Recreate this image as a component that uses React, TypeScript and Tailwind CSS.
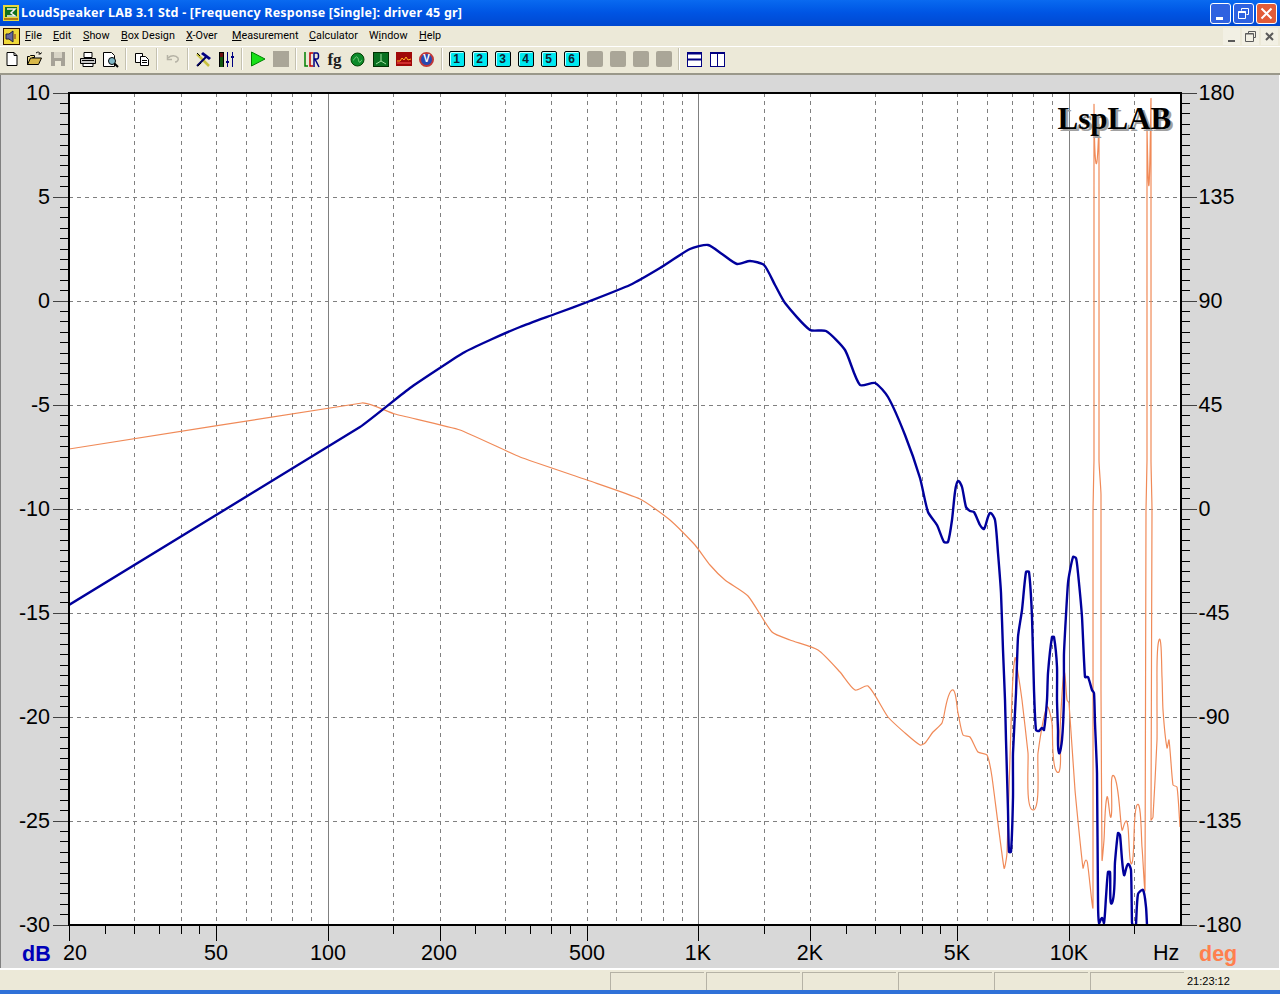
import React from "react";

// chart geometry, in page pixels (the svg's viewBox starts at the panel's top)
const PLOT = { l: 69, r: 1181, t: 93, b: 925 };
const SVG_TOP = 75;
const xOf = (hz: number) => Math.round(69 + Math.log10(hz / 20) * 370.5) + 0.5;

const blue =
  "69,605 360,427 410,388 463,353 490,340 520,327 555,314 590,301 630,285 660,268 690,249 708,245 722,254 737,264 750,261 764,265 775,285 785,303 810,330 826,331 845,350 860,385 875,383 888,397 905,435 920,478 928,512 937,525 944,542 948,542 952,520 955,492 958,481 962,487 966,507 970,511 974,512 980,525 984,529 990,513 995,520 998,553 1001,593 1003,650 1005,700 1006,740 1008,810 1009,852 1011,852 1013,797 1013,753 1016,693 1018,637 1022,610 1026,572 1029,572 1032,617 1034,690 1036,730 1039,731 1042,728 1044,730 1047,700 1048,673 1052,637 1054,637 1057,667 1057,700 1058,730 1059,753 1062,740 1064,697 1064,653 1068,583 1073,557 1076,558 1078,573 1082,617 1085,677 1088,677 1092,690 1094,693 1095,723 1097,773 1098,900 1099,923 1102,918 1104,923 1106,897 1108,872 1110,872 1112,903 1115,862 1118,833 1120,835 1124,875 1128,864 1131,870 1132,923 1133,925";
const blue2 = "1136,925 1138,894 1143,890 1146,907 1147,925";

const orange =
  "69,449 362,403 395,414 460,430 520,457 590,481 640,499 670,520 695,545 710,565 725,580 748,596 772,632 790,640 818,650 840,672 855,690 868,686 888,717 905,733 920,745 925,743 933,732 942,723 952,690 958,713 963,735 970,737 978,752 987,755 992,777 1004,868 1007,853 1010,757 1012,697 1015,658 1018,673 1022,700 1028,753 1033,810 1038,753 1047,707 1052,723 1057,772 1060,730 1064,673 1067,700 1069,703 1075,790 1083,868 1086,860 1088,867 1093,907 1093,510 1094,460 1094,105 1096,163 1099,125 1099,460 1101,495 1101,690 1102,860 1104,840 1107,797 1111,817 1114,776 1122,830 1126,821 1128,827 1132,863 1137,805 1142,847 1145,890 1146,510 1147,460 1147,130 1149,185 1151,99 1151,460 1152,510 1151,820 1153,817 1157,740 1157,690 1159,640 1162,677 1163,710 1167,748 1169,740 1173,785 1177,787 1180,827";

// rounds the hand-read points into a curve; handles stay short so nothing overshoots
function smooth(points: string) {
  const p = points.split(" ").map((s) => s.split(",").map(Number));
  const k = 0.2;
  const tangent = (i: number) => {
    const a = p[Math.max(i - 1, 0)];
    const b = p[Math.min(i + 1, p.length - 1)];
    const len = Math.hypot(b[0] - a[0], b[1] - a[1]) || 1;
    return [(b[0] - a[0]) / len, (b[1] - a[1]) / len];
  };
  let d = `M${p[0][0]} ${p[0][1]}`;
  for (let i = 0; i < p.length - 1; i++) {
    const b = p[i];
    const c = p[i + 1];
    const h = Math.min(Math.hypot(c[0] - b[0], c[1] - b[1]) * k, 8);
    const t0 = tangent(i);
    const t1 = tangent(i + 1);
    d += `C${b[0] + t0[0] * h} ${b[1] + t0[1] * h} ${c[0] - t1[0] * h} ${c[1] - t1[1] * h} ${c[0]} ${c[1]}`;
  }
  return d;
}

const dashedX = [30, 40, 50, 60, 70, 80, 90, 150, 200, 300, 400, 500, 600, 700, 800, 900, 1500, 2000, 3000, 4000, 5000, 6000, 7000, 8000, 9000, 15000];
const solidX = [100, 1000, 10000];
const shortTicks = [25, 30, 35, 40, 45, 150, 250, 300, 350, 400, 450, 1500, 2500, 3000, 3500, 4000, 4500, 15000];
const longTicks = [20, 50, 100, 200, 500, 1000, 2000, 5000, 10000];

const leftLabels = ["10", "5", "0", "-5", "-10", "-15", "-20", "-25", "-30"];
const rightLabels = ["180", "135", "90", "45", "0", "-45", "-90", "-135", "-180"];
const xLabels = [
  { t: "20", x: 75 },
  { t: "50", x: 216 },
  { t: "100", x: 328 },
  { t: "200", x: 439 },
  { t: "500", x: 587 },
  { t: "1K", x: 698 },
  { t: "2K", x: 810 },
  { t: "5K", x: 957 },
  { t: "10K", x: 1069 },
];

function Chart() {
  const minor = Array.from({ length: 81 }, (_, i) => PLOT.t + i * 10.4);
  return (
    <svg width="1280" height="893" viewBox={`0 ${SVG_TOP} 1280 893`} className="block">
      <defs>
        <clipPath id="plot">
          <rect x={PLOT.l} y={PLOT.t} width={PLOT.r - PLOT.l} height={PLOT.b - PLOT.t} />
        </clipPath>
      </defs>
      <rect x={PLOT.l} y={PLOT.t} width={PLOT.r - PLOT.l} height={PLOT.b - PLOT.t} fill="#fff" />
      {/* grid */}
      {dashedX.map((hz) => (
        <line key={hz} x1={xOf(hz)} x2={xOf(hz)} y1={PLOT.t} y2={PLOT.b} stroke="#808080" strokeDasharray="4 4" shapeRendering="crispEdges" />
      ))}
      {solidX.map((hz) => (
        <line key={hz} x1={xOf(hz)} x2={xOf(hz)} y1={PLOT.t} y2={PLOT.b} stroke="#808080" shapeRendering="crispEdges" />
      ))}
      {[1, 2, 3, 4, 5, 6, 7].map((i) => (
        <line key={i} x1={PLOT.l} x2={PLOT.r} y1={PLOT.t + i * 104} y2={PLOT.t + i * 104} stroke="#808080" strokeDasharray="4 4" shapeRendering="crispEdges" />
      ))}
      {/* curves */}
      <g clipPath="url(#plot)" fill="none" strokeLinejoin="round">
        <path d={smooth(orange)} stroke="#f08a58" strokeWidth="1.2" />
        <path d={smooth(blue)} stroke="#00009c" strokeWidth="2.4" />
        <path d={smooth(blue2)} stroke="#00009c" strokeWidth="2.4" />
      </g>
      {/* ticks */}
      {minor.map((y, i) => (
        <g key={i} shapeRendering="crispEdges">
          <line x1={i % 10 === 0 ? 53 : 60} x2={PLOT.l} y1={y} y2={y} stroke={i % 10 === 0 ? "#404040" : "#000"} />
          <line x1={PLOT.r} x2={i % 10 === 0 ? 1197 : 1190} y1={y} y2={y} stroke={i % 10 === 0 ? "#404040" : "#000"} />
        </g>
      ))}
      {shortTicks.map((hz) => (
        <line key={hz} x1={xOf(hz)} x2={xOf(hz)} y1={PLOT.b} y2={934} stroke="#000" shapeRendering="crispEdges" />
      ))}
      {longTicks.map((hz) => (
        <line key={hz} x1={xOf(hz)} x2={xOf(hz)} y1={PLOT.b} y2={941} stroke="#000" shapeRendering="crispEdges" />
      ))}
      <rect x={PLOT.l} y={PLOT.t} width={PLOT.r - PLOT.l} height={PLOT.b - PLOT.t} fill="none" stroke="#000" strokeWidth="2" shapeRendering="crispEdges" />
      {/* labels */}
      <g fontFamily="'Liberation Sans', Arial, sans-serif" fontSize="21.5" fill="#000">
        {leftLabels.map((t, i) => (
          <text key={t} x="50" y={PLOT.t + i * 104 + 7} textAnchor="end">{t}</text>
        ))}
        {rightLabels.map((t, i) => (
          <text key={t} x="1198.500" y={PLOT.t + i * 104 + 7}>{t}</text>
        ))}
        {xLabels.map((l) => (
          <text key={l.t} x={l.x} y="960" textAnchor="middle">{l.t}</text>
        ))}
        <text x="1153" y="960">Hz</text>
        <text x="22" y="961" fill="#0000b8" fontWeight="700">dB</text>
        <text x="1199" y="961" fill="#ff7f4d" fontWeight="700">deg</text>
      </g>
      <g fontFamily="'Liberation Serif', 'Times New Roman', serif" fontWeight="700" fontSize="31">
        <text x="1060" y="131" fill="#a0a0a0">LspLAB</text>
        <text x="1057.500" y="129" fill="#000">LspLAB</text>
      </g>
    </svg>
  );
}

function Sep({ narrow }: { narrow?: boolean }) {
  return <div className={`${narrow ? "mr-[2px] ml-[3px]" : "mx-[3px]"} h-[22px] w-[2px] border-r border-l border-r-white border-l-[#c4c1b0]`} />;
}

function Tb({ children }: { children: React.ReactNode }) {
  return <div className="flex h-[23px] w-[23px] items-center justify-center">{children}</div>;
}

function NewIcon() {
  return (
    <svg width="16" height="16" viewBox="0 0 16 16">
      <path d="M3 1.500h7l3 3v10H3z" fill="#fff" stroke="#000" />
      <path d="M10 1.500v3h3" fill="none" stroke="#000" />
    </svg>
  );
}
function OpenIcon() {
  return (
    <svg width="17" height="16" viewBox="0 0 17 16">
      <path d="M1.500 13.500v-8h2l1-1h4v2h-2l-3 7z" fill="#f4e08a" stroke="#000" />
      <path d="M1.500 13.500l3-6.500h11l-3 6.500z" fill="#d8b84a" stroke="#000" />
      <path d="M10 2c2-1.500 3.500-1 4.500 1M14.500 3l1-1.500M14.500 3l-2 0" fill="none" stroke="#000" />
    </svg>
  );
}
function SaveIcon() {
  return (
    <svg width="16" height="16" viewBox="0 0 16 16">
      <path d="M1 1h14v14H1z" fill="#a6a297" />
      <path d="M4 1h8v6H4z" fill="#d8d4c6" />
      <path d="M5 10h6v5H5z" fill="#ece9d8" />
    </svg>
  );
}
function PrintIcon() {
  return (
    <svg width="18" height="16" viewBox="0 0 18 16">
      <path d="M5 1.500h8v5H5z" fill="#fff" stroke="#000" />
      <path d="M1.500 7.500h15v5h-15z" fill="#c8c8c8" stroke="#000" />
      <path d="M4 12.500h10v3H4z" fill="#fff" stroke="#000" />
      <path d="M3 9.500h12" stroke="#000" />
    </svg>
  );
}
function PreviewIcon() {
  return (
    <svg width="17" height="17" viewBox="0 0 17 17">
      <path d="M1.500 1.500h8l3 3v11h-11z" fill="#fff" stroke="#000" />
      <circle cx="10" cy="10" r="3.500" fill="#7fb8c8" stroke="#000" />
      <path d="M12.500 12.500l3.500 3.500" stroke="#000" strokeWidth="2" />
    </svg>
  );
}
function CopyIcon() {
  return (
    <svg width="16" height="16" viewBox="0 0 16 16">
      <path d="M1.500 2.500h7v9h-7z" fill="#fff" stroke="#000" />
      <path d="M6.500 5.500h5l3 3v6h-8z" fill="#fff" stroke="#000" />
      <path d="M8 9.500h5M8 11.500h5" stroke="#000" />
    </svg>
  );
}
function UndoIcon() {
  return (
    <svg width="16" height="16" viewBox="0 0 16 16" fill="none">
      <path d="M3 7c3-3 8-3 10 0 1 2-1 4-3 4" stroke="#b5b2a5" strokeWidth="1.500" />
      <path d="M2.500 4v4.500H7" stroke="#b5b2a5" strokeWidth="1.500" />
    </svg>
  );
}
function ToolsIcon() {
  return (
    <svg width="18" height="18" viewBox="0 0 18 18">
      <path d="M2 4l12 12" stroke="#c8c040" strokeWidth="2.500" />
      <path d="M2 16L12 6" stroke="#000060" strokeWidth="2" />
      <path d="M8 2l8 6-2 2-8-6z" fill="#000080" />
      <path d="M2 3l3 3M3 16l3-3" stroke="#000" />
    </svg>
  );
}
function MixerIcon() {
  return (
    <svg width="17" height="17" viewBox="0 0 17 17">
      <path d="M1 1h5v15H1z" fill="#000" />
      <path d="M2 3h3M2 5h3" stroke="#d02020" />
      <path d="M2 7h3M2 9h3M2 11h3M2 13h3M2 15h3" stroke="#20b020" />
      <path d="M9.500 1v15M14.500 1v15" stroke="#000080" />
      <path d="M8 10h3v2H8zM13 5h3v2h-3z" fill="#000080" />
    </svg>
  );
}
function LcrIcon() {
  return (
    <svg width="17" height="17" viewBox="0 0 17 17" fill="none">
      <path d="M2 1v14h3" stroke="#008000" strokeWidth="1.500" />
      <path d="M10 2H7v13h3" stroke="#c00000" strokeWidth="1.500" />
      <path d="M11 16V2h3c2 0 2 6 0 6h-2l4 8" stroke="#000080" strokeWidth="1.500" />
    </svg>
  );
}

function NumBtn({ n }: { n: number }) {
  return (
    <div className="flex h-[16px] w-[16px] items-center justify-center rounded-[2px] border border-black bg-[#00e8f0] text-[12px] leading-none font-bold text-[#102030] shadow-[inset_1px_1px_0_#b8ffff] [font-family:'Liberation_Sans',sans-serif]">
      {n}
    </div>
  );
}

const menus = [
  { l: "File", u: 0, w: "w-[28px]" },
  { l: "Edit", u: 0, w: "w-[30px]" },
  { l: "Show", u: 0, w: "w-[38px]" },
  { l: "Box Design", u: 0, w: "w-[65px]" },
  { l: "X-Over", u: 0, w: "w-[46px]" },
  { l: "Measurement", u: 0, w: "w-[77px]" },
  { l: "Calculator", u: 0, w: "w-[60px]" },
  { l: "Window", u: 1, w: "w-[50px]" },
  { l: "Help", u: 0, w: "w-[34px]" },
];

export default function App() {
  return (
    <div className="flex h-[994px] w-[1280px] flex-col overflow-hidden bg-[#ece9d8] [font-family:'Roboto','Liberation_Sans',sans-serif]">
      {/* title bar */}
      <div className="flex h-[26px] shrink-0 items-center bg-gradient-to-b from-[#0a6af0] via-[#0054e3] to-[#0048d0] pr-[3px] pl-[3px]">
        <svg width="16" height="16" viewBox="0 0 16 16" className="shrink-0">
          <rect width="16" height="16" fill="#e8d840" />
          <rect x="2" y="2" width="12" height="10" fill="#107020" />
          <path d="M4 4h8L8 8l4 3H4" fill="none" stroke="#f0f0f0" strokeWidth="1.500" />
          <rect x="1" y="13" width="14" height="2" fill="#b07810" />
        </svg>
        <div className="ml-[2px] flex-1 text-[12.500px] font-bold tracking-[0.2px] whitespace-nowrap text-white [font-family:'Noto_Sans',sans-serif]">
          LoudSpeaker LAB 3.1 Std - [Frequency Response [Single]: driver 45 gr]
        </div>
        <div className="flex gap-[2px]">
          <div className="flex h-[21px] w-[21px] items-end rounded-[3px] border border-white bg-[#2f62e0] pb-[3px] pl-[5px]">
            <div className="h-[3px] w-[7px] bg-white" />
          </div>
          <div className="flex h-[21px] w-[21px] items-center justify-center rounded-[3px] border border-white bg-[#2f62e0]">
            <svg width="13" height="13" viewBox="0 0 13 13" fill="none" stroke="#fff">
              <path d="M4.500 3.500v-2h7v6h-2" />
              <path d="M1.500 4.500h7v7h-7z" />
              <path d="M1.500 5h7" strokeWidth="2" />
            </svg>
          </div>
          <div className="flex h-[21px] w-[21px] items-center justify-center rounded-[3px] border border-white bg-[#e25c38]">
            <svg width="13" height="13" viewBox="0 0 13 13" stroke="#fff" strokeWidth="2">
              <path d="M1.500 1.500l10 10M11.500 1.500l-10 10" />
            </svg>
          </div>
        </div>
      </div>

      {/* menu bar */}
      <div className="flex h-[21px] shrink-0 items-center border-b border-b-white pl-[3px] text-[10.800px] text-black">
        <svg width="17" height="17" viewBox="0 0 17 17" className="shrink-0">
          <rect x="0.500" y="0.500" width="16" height="16" fill="#f0d838" stroke="#301000" />
          <path d="M3 6h3l4-3v11l-4-3H3z" fill="#6868a0" stroke="#202040" />
          <path d="M12 6v5" stroke="#802020" />
        </svg>
        <div className="ml-[5px] flex flex-1 items-center">
          {menus.map((m) => (
            <div key={m.l} className={`${m.w} whitespace-nowrap`}>
              {m.l.slice(0, m.u)}
              <span className="underline">{m.l[m.u]}</span>
              {m.l.slice(m.u + 1)}
            </div>
          ))}
        </div>
        <div className="flex items-center gap-[2px] pr-[2px]">
          <div className="flex h-[17px] w-[17px] items-end justify-center bg-[#f2f0e4] pb-[3px]">
            <div className="h-[2px] w-[7px] bg-[#5a5a5a]" />
          </div>
          <div className="flex h-[17px] w-[17px] items-center justify-center bg-[#f2f0e4]">
            <svg width="11" height="11" viewBox="0 0 11 11" fill="none" stroke="#5a5a5a">
              <path d="M3.500 2.500v-2h7v6h-2" />
              <path d="M0.500 3h8M0.500 2.500h8v8h-8z" />
            </svg>
          </div>
          <div className="flex h-[17px] w-[17px] items-center justify-center bg-[#f2f0e4]">
            <svg width="9" height="9" viewBox="0 0 9 9" stroke="#5a5a5a" strokeWidth="2">
              <path d="M1 1l7 7M8 1L1 8" />
            </svg>
          </div>
        </div>
      </div>

      {/* toolbar */}
      <div className="flex h-[28px] shrink-0 items-center border-b-[2px] border-b-[#9a988a] pb-[2px]">
        <Tb><NewIcon /></Tb>
        <Tb><OpenIcon /></Tb>
        <Tb><SaveIcon /></Tb>
        <Sep narrow />
        <Tb><PrintIcon /></Tb>
        <Tb><PreviewIcon /></Tb>
        <Sep />
        <Tb><CopyIcon /></Tb>
        <Sep />
        <Tb><UndoIcon /></Tb>
        <Sep />
        <Tb><ToolsIcon /></Tb>
        <Tb><MixerIcon /></Tb>
        <Sep />
        <Tb>
          <svg width="16" height="16" viewBox="0 0 16 16"><path d="M1.500 1v14L15 8z" fill="#18e018" stroke="#008000" /></svg>
        </Tb>
        <Tb><div className="h-[16px] w-[16px] bg-[#aaa698]" /></Tb>
        <Sep />
        <Tb><LcrIcon /></Tb>
        <Tb><span className="text-[17px] leading-none font-bold text-[#202020] [font-family:'Liberation_Serif',serif]">fg</span></Tb>
        <Tb>
          <svg width="15" height="15" viewBox="0 0 15 15">
            <circle cx="7.500" cy="7.500" r="6.500" fill="#0c8a2a" stroke="#004000" />
            <path d="M3 8c2 0 2-4 4-3s1 6 3 5 1-2 2-2" fill="none" stroke="#80d080" />
          </svg>
        </Tb>
        <Tb>
          <svg width="16" height="15" viewBox="0 0 16 15">
            <rect x="0.500" y="0.500" width="15" height="14" fill="#087020" stroke="#003000" />
            <path d="M8 2v7M8 9l-5 3M8 9l5 3" fill="none" stroke="#a0e0a0" />
          </svg>
        </Tb>
        <Tb>
          <svg width="16" height="14" viewBox="0 0 16 14">
            <rect width="16" height="14" fill="#a00808" />
            <path d="M1 9h3l2-3 2 2 2-3 2 3 3-1" fill="none" stroke="#ffb020" />
            <path d="M1 11h14" stroke="#ff5050" />
          </svg>
        </Tb>
        <Tb>
          <div className="flex h-[15px] w-[15px] items-center justify-center rounded-full border-2 border-[#c03838] bg-[#2848b0] text-[10px] leading-none font-bold text-white [font-family:'Liberation_Sans',sans-serif]">V</div>
        </Tb>
        <Sep narrow />
        {[1, 2, 3, 4, 5, 6].map((n) => (
          <Tb key={n}><NumBtn n={n} /></Tb>
        ))}
        {[0, 1, 2, 3].map((n) => (
          <Tb key={n}><div className="h-[16px] w-[16px] rounded-[2px] bg-[#aaa698]" /></Tb>
        ))}
        <Sep />
        <Tb>
          <svg width="15" height="15" viewBox="0 0 15 15" fill="#fff" stroke="#000080">
            <rect x="0.500" y="0.500" width="14" height="14" />
            <path d="M0 1.500h15M0 7.500h15" strokeWidth="2" />
          </svg>
        </Tb>
        <Tb>
          <svg width="15" height="15" viewBox="0 0 15 15" fill="#fff" stroke="#000080">
            <rect x="0.500" y="0.500" width="14" height="14" />
            <path d="M0 1.500h15M7.500 0v15" />
          </svg>
        </Tb>
      </div>

      {/* chart panel */}
      <div className="h-[893px] shrink-0 bg-[#d8d8d8] shadow-[inset_1px_0_0_#808080,inset_-1px_0_0_#fff]">
        <Chart />
      </div>

      {/* status bar */}
      <div className="flex h-[22px] shrink-0 items-stretch border-t-2 border-t-white pt-[2px]">
        <div className="flex-1" />
        <div className="flex gap-[2px]">
          {[0, 1, 2, 3, 4, 5].map((i) => (
            <div key={i} className="w-[94px] border-t border-l border-t-[#b5b2a5] border-l-[#b5b2a5]" />
          ))}
        </div>
        <div className="flex w-[96px] items-center pl-[3px] text-[11px] text-black [font-family:'Liberation_Sans',sans-serif]">21:23:12</div>
      </div>

      {/* taskbar edge */}
      <div className="h-[4px] shrink-0 bg-[#2f71d8]" />
    </div>
  );
}
